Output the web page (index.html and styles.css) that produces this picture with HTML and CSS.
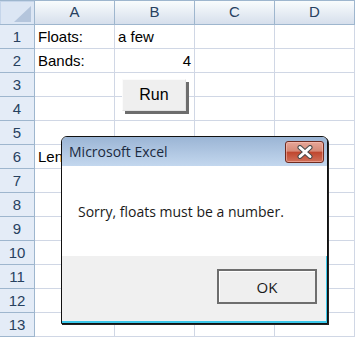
FILE: index.html
```html
<!DOCTYPE html>
<html lang="en">
<head>
  <meta charset="UTF-8">
  <meta name="viewport" content="width=device-width, initial-scale=1.0">
  <title>Sheet</title>
  <link rel="stylesheet" href="styles.css">
</head>
<body>

  <div class="sheet">
    <div class="grid">
      <div class="corner">
        <svg width="17" height="16" viewBox="0 0 17 16"><polygon points="17,0 17,16 0,16" fill="#b4c5dc"/></svg>
      </div>
      <div class="col-head">A</div>
      <div class="col-head">B</div>
      <div class="col-head">C</div>
      <div class="col-head">D</div>

      <div class="row-head">1</div>
      <div class="cell">Floats:</div>
      <div class="cell">a few</div>
      <div class="cell"></div>
      <div class="cell"></div>

      <div class="row-head">2</div>
      <div class="cell">Bands:</div>
      <div class="cell num">4</div>
      <div class="cell"></div>
      <div class="cell"></div>

      <div class="row-head">3</div>
      <div class="cell"></div><div class="cell"></div><div class="cell"></div><div class="cell"></div>

      <div class="row-head">4</div>
      <div class="cell"></div><div class="cell"></div><div class="cell"></div><div class="cell"></div>

      <div class="row-head">5</div>
      <div class="cell"></div><div class="cell"></div><div class="cell"></div><div class="cell"></div>

      <div class="row-head">6</div>
      <div class="cell clip">Length:</div><div class="cell"></div><div class="cell"></div><div class="cell"></div>

      <div class="row-head">7</div>
      <div class="cell"></div><div class="cell"></div><div class="cell"></div><div class="cell"></div>

      <div class="row-head">8</div>
      <div class="cell"></div><div class="cell"></div><div class="cell"></div><div class="cell"></div>

      <div class="row-head">9</div>
      <div class="cell"></div><div class="cell"></div><div class="cell"></div><div class="cell"></div>

      <div class="row-head">10</div>
      <div class="cell"></div><div class="cell"></div><div class="cell"></div><div class="cell"></div>

      <div class="row-head">11</div>
      <div class="cell"></div><div class="cell"></div><div class="cell"></div><div class="cell"></div>

      <div class="row-head">12</div>
      <div class="cell"></div><div class="cell"></div><div class="cell"></div><div class="cell"></div>

      <div class="row-head">13</div>
      <div class="cell"></div><div class="cell"></div><div class="cell"></div><div class="cell"></div>
    </div>

    <!-- form button sits on top of the cells -->
    <button class="run">Run</button>

    <div class="dialog">
      <div class="title-bar">
        <span class="title">Microsoft Excel</span>
        <span class="close">
          <svg width="18" height="14" viewBox="0 0 18 14">
            <path d="M4 2.5 L14 11.5 M14 2.5 L4 11.5" stroke="#4a4a4a" stroke-width="5" stroke-linecap="round"/>
            <path d="M4 2.5 L14 11.5 M14 2.5 L4 11.5" stroke="#fff" stroke-width="3" stroke-linecap="round"/>
          </svg>
        </span>
      </div>
      <div class="message">Sorry, floats must be a number.</div>
      <div class="footer">
        <button class="ok">OK</button>
      </div>
    </div>
  </div>

</body>
</html>
```

FILE: styles.css
```css
body {
  margin: 0;
  background: white;
}
.sheet {
  position: relative;
  width: 355px;
  height: 337px;
  overflow: hidden;
  font-family: "Liberation Sans", Arial, sans-serif;
  font-size: 15px;
  color: #000;
}
.grid {
  display: grid;
  grid-template-columns: 35px repeat(4, 80px);
  grid-template-rows: 25px repeat(13, 24px);
}
.grid > div {
  box-sizing: border-box;
  border-right: 1px solid #d0d7e5;
  border-bottom: 1px solid #d0d7e5;
  line-height: 23px;
  white-space: nowrap;
}
.corner {
  display: flex;
  align-items: flex-end;
  justify-content: flex-end;
  padding: 0 3px 2px 0;
  background: #dce6f4;
  border-top: 1px solid #9eb6ce;
  box-shadow: inset 1px 1px 0 #c5d5ea;
}
.grid > .corner,
.grid > .col-head {
  border-right-color: #9eb6ce;
  border-bottom-color: #9eb6ce;
}
.col-head {
  text-align: center;
  color: #27415f;
  background: linear-gradient(#f9fcfd, #d6dfec);
  border-top: 1px solid #9eb6ce;
  line-height: 22px !important;
}
.grid > .row-head {
  text-align: center;
  color: #27415f;
  background: #e4ecf7;
  border-right-color: #9eb6ce;
  border-bottom-color: #9eb6ce;
}
.cell {
  padding: 0 3px;
  background: white;
}
.cell.num {
  text-align: right;
}
.cell.clip {
  overflow: hidden;
  padding-right: 0;
}
.run {
  position: absolute;
  left: 122px;
  top: 79px;
  width: 64px;
  height: 32px;
  padding: 0;
  font-family: "Liberation Sans", Arial, sans-serif;
  font-size: 16px;
  color: #000;
  background: #efefef;
  border: 1px solid #e2e2e2;
  border-top-color: #fbfbfb;
  border-left-color: #fbfbfb;
  box-shadow: 3px 3px 0 #6d6d6d;
}
.dialog {
  position: absolute;
  left: 61px;
  top: 136px;
  width: 267px;
  height: 188px;
  box-sizing: border-box;
  display: flex;
  flex-direction: column;
  border: 1px solid #111;
  border-radius: 6px 6px 0 0;
  box-shadow: 1px 1px 0 #222;
  background: white;
  font-family: "Open Sans", sans-serif;
  font-size: 14px;
  color: #1a1a1a;
  overflow: hidden;
}
.title-bar {
  height: 29px;
  flex-shrink: 0;
  display: flex;
  align-items: center;
  justify-content: space-between;
  padding: 0 3px 0 7px;
  background: linear-gradient(#9bb5d5, #c3d7ee);
}
.title {
  font-size: 14px;
  color: #1b2a3e;
}
.close {
  box-sizing: border-box;
  width: 39px;
  height: 22px;
  display: flex;
  align-items: center;
  justify-content: center;
  border: 1px solid #6e2b20;
  border-radius: 3px;
  background: linear-gradient(#e7a798 0%, #d68a78 45%, #c0472f 52%, #d0715a 100%);
  box-shadow: inset 0 0 0 1px rgba(255, 200, 190, 0.5);
}
.message {
  height: 90px;
  flex-shrink: 0;
  display: flex;
  align-items: center;
  padding-left: 16px;
}
.footer {
  flex: 1;
  display: flex;
  justify-content: flex-end;
  align-items: flex-start;
  padding: 13px 9px 0 0;
  background: #f0f0f0;
  border-bottom: 2px solid #3cc8ea;
  border-right: 1px solid #3cc8ea;
}
.ok {
  width: 100px;
  height: 35px;
  padding: 0;
  font-family: "Open Sans", sans-serif;
  font-size: 15px;
  color: #1a1a1a;
  background: #efefef;
  border: 2px solid #6e6e6e;
  box-shadow: inset 1px 1px 0 #fff;
}
```
